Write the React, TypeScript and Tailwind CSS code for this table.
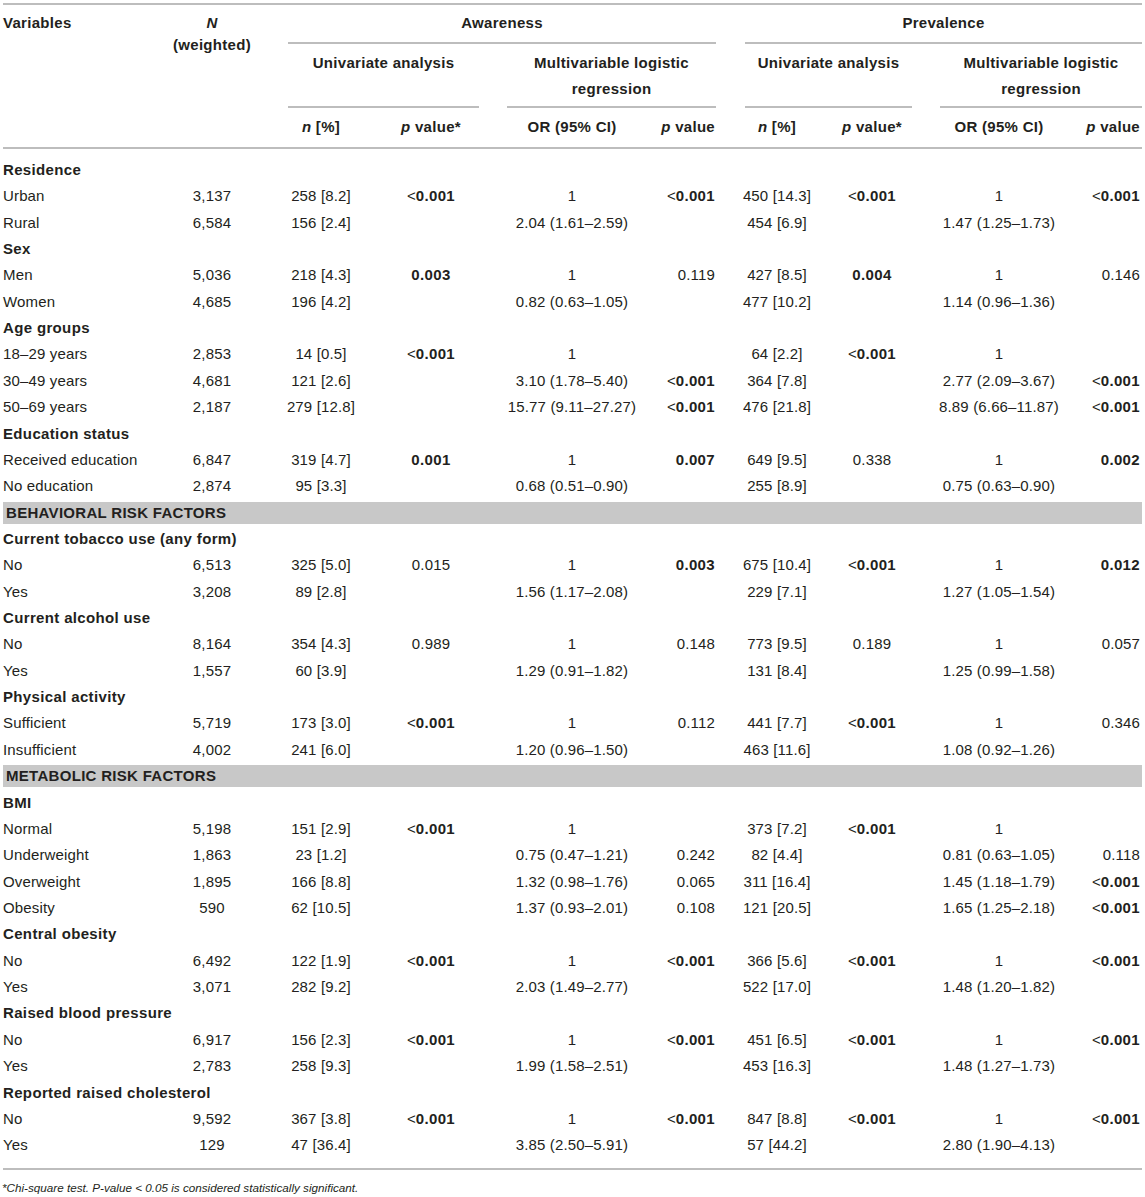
import React from "react";

const GRID =
  "grid grid-cols-[160px_104px_114px_106px_176px_75px_84px_106px_148px_72px]";

type DataRow = { t: "d"; c: string[] };
type HeadRow = { t: "h"; label: string };
type BandRow = { t: "b"; label: string };
type Row = DataRow | HeadRow | BandRow;

const d = (...c: string[]): DataRow => ({ t: "d", c });
const h = (label: string): HeadRow => ({ t: "h", label });
const b = (label: string): BandRow => ({ t: "b", label });

const rows: Row[] = [
  h("Residence"),
  d("Urban", "3,137", "258 [8.2]", "!<0.001", "1", "!<0.001", "450 [14.3]", "!<0.001", "1", "!<0.001"),
  d("Rural", "6,584", "156 [2.4]", "", "2.04 (1.61–2.59)", "", "454 [6.9]", "", "1.47 (1.25–1.73)", ""),
  h("Sex"),
  d("Men", "5,036", "218 [4.3]", "!0.003", "1", "0.119", "427 [8.5]", "!0.004", "1", "0.146"),
  d("Women", "4,685", "196 [4.2]", "", "0.82 (0.63–1.05)", "", "477 [10.2]", "", "1.14 (0.96–1.36)", ""),
  h("Age groups"),
  d("18–29 years", "2,853", "14 [0.5]", "!<0.001", "1", "", "64 [2.2]", "!<0.001", "1", ""),
  d("30–49 years", "4,681", "121 [2.6]", "", "3.10 (1.78–5.40)", "!<0.001", "364 [7.8]", "", "2.77 (2.09–3.67)", "!<0.001"),
  d("50–69 years", "2,187", "279 [12.8]", "", "15.77 (9.11–27.27)", "!<0.001", "476 [21.8]", "", "8.89 (6.66–11.87)", "!<0.001"),
  h("Education status"),
  d("Received education", "6,847", "319 [4.7]", "!0.001", "1", "!0.007", "649 [9.5]", "0.338", "1", "!0.002"),
  d("No education", "2,874", "95 [3.3]", "", "0.68 (0.51–0.90)", "", "255 [8.9]", "", "0.75 (0.63–0.90)", ""),
  b("BEHAVIORAL RISK FACTORS"),
  h("Current tobacco use (any form)"),
  d("No", "6,513", "325 [5.0]", "0.015", "1", "!0.003", "675 [10.4]", "!<0.001", "1", "!0.012"),
  d("Yes", "3,208", "89 [2.8]", "", "1.56 (1.17–2.08)", "", "229 [7.1]", "", "1.27 (1.05–1.54)", ""),
  h("Current alcohol use"),
  d("No", "8,164", "354 [4.3]", "0.989", "1", "0.148", "773 [9.5]", "0.189", "1", "0.057"),
  d("Yes", "1,557", "60 [3.9]", "", "1.29 (0.91–1.82)", "", "131 [8.4]", "", "1.25 (0.99–1.58)", ""),
  h("Physical activity"),
  d("Sufficient", "5,719", "173 [3.0]", "!<0.001", "1", "0.112", "441 [7.7]", "!<0.001", "1", "0.346"),
  d("Insufficient", "4,002", "241 [6.0]", "", "1.20 (0.96–1.50)", "", "463 [11.6]", "", "1.08 (0.92–1.26)", ""),
  b("METABOLIC RISK FACTORS"),
  h("BMI"),
  d("Normal", "5,198", "151 [2.9]", "!<0.001", "1", "", "373 [7.2]", "!<0.001", "1", ""),
  d("Underweight", "1,863", "23 [1.2]", "", "0.75 (0.47–1.21)", "0.242", "82 [4.4]", "", "0.81 (0.63–1.05)", "0.118"),
  d("Overweight", "1,895", "166 [8.8]", "", "1.32 (0.98–1.76)", "0.065", "311 [16.4]", "", "1.45 (1.18–1.79)", "!<0.001"),
  d("Obesity", "590", "62 [10.5]", "", "1.37 (0.93–2.01)", "0.108", "121 [20.5]", "", "1.65 (1.25–2.18)", "!<0.001"),
  h("Central obesity"),
  d("No", "6,492", "122 [1.9]", "!<0.001", "1", "!<0.001", "366 [5.6]", "!<0.001", "1", "!<0.001"),
  d("Yes", "3,071", "282 [9.2]", "", "2.03 (1.49–2.77)", "", "522 [17.0]", "", "1.48 (1.20–1.82)", ""),
  h("Raised blood pressure"),
  d("No", "6,917", "156 [2.3]", "!<0.001", "1", "!<0.001", "451 [6.5]", "!<0.001", "1", "!<0.001"),
  d("Yes", "2,783", "258 [9.3]", "", "1.99 (1.58–2.51)", "", "453 [16.3]", "", "1.48 (1.27–1.73)", ""),
  h("Reported raised cholesterol"),
  d("No", "9,592", "367 [3.8]", "!<0.001", "1", "!<0.001", "847 [8.8]", "!<0.001", "1", "!<0.001"),
  d("Yes", "129", "47 [36.4]", "", "3.85 (2.50–5.91)", "", "57 [44.2]", "", "2.80 (1.90–4.13)", ""),
];

const align = [
  "text-left pl-[3px]",
  "text-center",
  "text-center",
  "text-center",
  "text-center",
  "text-right pr-[20px]",
  "text-center",
  "text-center",
  "text-center",
  "text-right pr-[5px]",
];

function Val({ s }: { s: string }) {
  if (s.startsWith("!")) {
    const v = s.slice(1);
    if (v.startsWith("<")) {
      return (
        <span>
          <span className="font-normal">&lt;</span>
          <span className="font-bold tracking-[0.35px]">{v.slice(1)}</span>
        </span>
      );
    }
    return <span className="font-bold tracking-[0.35px]">{v}</span>;
  }
  return <span className="tracking-[0.15px]">{s}</span>;
}

function Line({ className = "" }: { className?: string }) {
  return <div className={`h-[2px] bg-[#bdbdbd] ${className}`} />;
}

export default function App() {
  return (
    <div
      className="w-[1145px] h-[1197px] overflow-hidden bg-white text-[15px] text-[#231f20]"
      style={{ fontFamily: '"Liberation Sans", Arial, Helvetica, sans-serif' }}
    >
      <div className="h-[3px]" />
      <Line className="mx-[3px]" />

      {/* Header */}
      <div className={`${GRID} grid-rows-[39px_64px_39px] font-bold tracking-[0.3px]`}>
        <div className="col-start-1 row-start-1 row-span-3 pl-[3px] pt-[5px] leading-[26px]">
          Variables
        </div>
        <div className="col-start-2 row-start-1 row-span-3 pt-[7px] leading-[22px] text-center">
          <div className="italic">N</div>
          <div>(weighted)</div>
        </div>

        <div className="col-start-3 col-span-4 row-start-1 ml-[24px] mr-[19px] border-b-2 border-[#bdbdbd] flex items-center justify-center">
          Awareness
        </div>
        <div className="col-start-7 col-span-4 row-start-1 ml-[10px] mr-[3px] border-b-2 border-[#bdbdbd] flex items-center justify-center">
          Prevalence
        </div>

        <div className="col-start-3 col-span-2 row-start-2 ml-[24px] mr-[5px] border-b-2 border-[#bdbdbd] pt-[5.5px] leading-[26px] text-center">
          Univariate analysis
        </div>
        <div className="col-start-5 col-span-2 row-start-2 ml-[23px] mr-[19px] border-b-2 border-[#bdbdbd] pt-[5.5px] leading-[26px] text-center">
          Multivariable logistic
          <br />
          regression
        </div>
        <div className="col-start-7 col-span-2 row-start-2 ml-[10px] mr-[13px] border-b-2 border-[#bdbdbd] pt-[5.5px] leading-[26px] text-center">
          Univariate analysis
        </div>
        <div className="col-start-9 col-span-2 row-start-2 ml-[15px] mr-[3px] border-b-2 border-[#bdbdbd] pt-[5.5px] leading-[26px] text-center">
          Multivariable logistic
          <br />
          regression
        </div>

        <div className="col-start-3 row-start-3 flex items-center justify-center whitespace-nowrap">
          <span className="italic">n</span>&nbsp;[%]
        </div>
        <div className="col-start-4 row-start-3 flex items-center justify-center whitespace-nowrap">
          <span className="italic">p</span>&nbsp;value*
        </div>
        <div className="col-start-5 row-start-3 flex items-center justify-center whitespace-nowrap">
          OR (95% CI)
        </div>
        <div className="col-start-6 row-start-3 flex items-center justify-end pr-[20px] whitespace-nowrap">
          <span className="italic">p</span>&nbsp;value
        </div>
        <div className="col-start-7 row-start-3 flex items-center justify-center whitespace-nowrap">
          <span className="italic">n</span>&nbsp;[%]
        </div>
        <div className="col-start-8 row-start-3 flex items-center justify-center whitespace-nowrap">
          <span className="italic">p</span>&nbsp;value*
        </div>
        <div className="col-start-9 row-start-3 flex items-center justify-center whitespace-nowrap">
          OR (95% CI)
        </div>
        <div className="col-start-10 row-start-3 flex items-center justify-end pr-[5px] whitespace-nowrap">
          <span className="italic">p</span>&nbsp;value
        </div>
      </div>

      <Line className="mx-[3px]" />

      {/* Body */}
      <div className="pt-[8px] pb-[9px]">
        {rows.map((r, i) => {
          if (r.t === "h") {
            return (
              <div key={i} className="h-[26.37px] flex items-center pl-[3px] font-bold tracking-[0.35px] whitespace-nowrap">
                {r.label}
              </div>
            );
          }
          if (r.t === "b") {
            return (
              <div key={i} className="h-[26.37px] flex items-center">
                <div className="mx-[3px] w-full h-[22px] bg-[#c8c8c8] flex items-center pl-[3px] font-bold tracking-[0.3px] whitespace-nowrap">
                  {r.label}
                </div>
              </div>
            );
          }
          return (
            <div key={i} className={`${GRID} h-[26.37px] items-center`}>
              {r.c.map((s, j) => (
                <div key={j} className={`${align[j]} whitespace-nowrap`}>
                  <Val s={s} />
                </div>
              ))}
            </div>
          );
        })}
      </div>

      <Line className="mx-[3px]" />

      <div className="mt-[10px] pl-[2px] text-[11.7px] leading-[16px] italic whitespace-nowrap">
        *Chi-square test. P-value &lt; 0.05 is considered statistically significant.
      </div>
    </div>
  );
}
